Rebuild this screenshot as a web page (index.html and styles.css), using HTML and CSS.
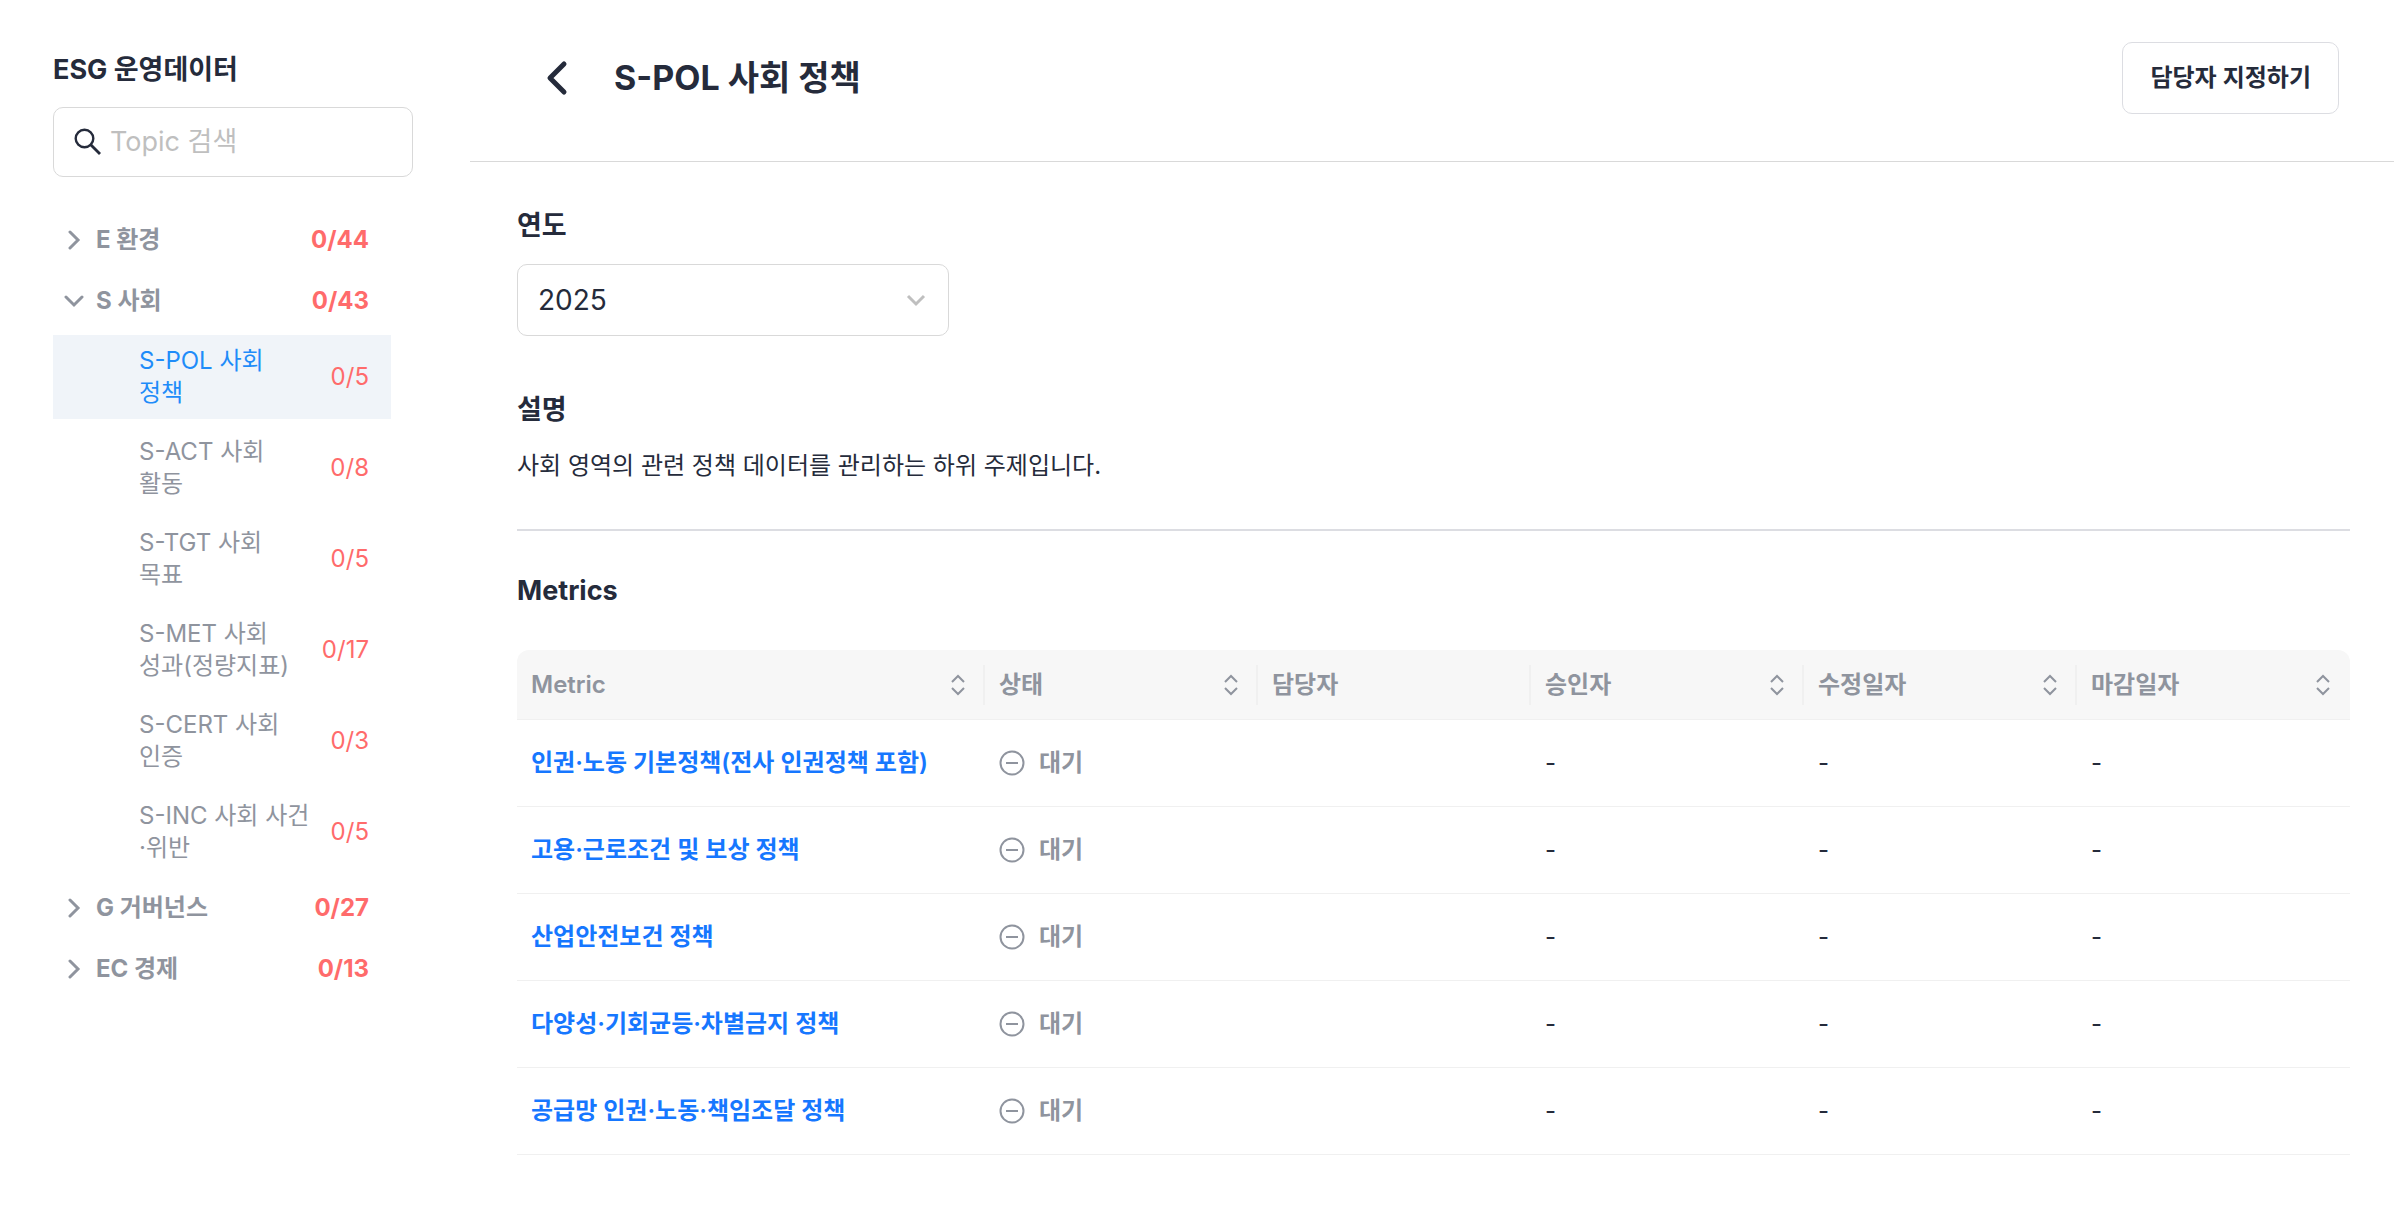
FILE: index.html
```html
<!DOCTYPE html>
<html lang="ko">
<head>
  <meta charset="UTF-8">
  <meta name="viewport" content="width=device-width, initial-scale=1.0">
  <title>ESG 운영데이터</title>
  <link rel="stylesheet" href="styles.css">
</head>
<body>

<!-- 공통 아이콘 -->
<svg class="icon-defs" aria-hidden="true">
  <symbol id="chevron-right" viewBox="0 0 20 20"><path d="M6 2l8 8-8 8"/></symbol>
  <symbol id="chevron-down" viewBox="0 0 20 20"><path d="M2 6l8 8 8-8"/></symbol>
  <symbol id="sorter" viewBox="0 0 18 24"><path d="M3 9l6-6 6 6M3 15l6 6 6-6"/></symbol>
  <symbol id="minus-circle" viewBox="0 0 26 26"><circle cx="13" cy="13" r="11.5"/><path d="M7 13h12"/></symbol>
</svg>

<div class="layout">
  <aside class="sidebar">
    <h2><label for="search">ESG 운영데이터</label></h2>
    <div class="search-box">
      <svg viewBox="0 0 28 28"><circle cx="10.5" cy="10.5" r="8.8" stroke-width="2.4"/><path d="M17 17l9 9" stroke-width="2.8"/></svg>
      <input type="text" id="search" placeholder="Topic 검색">
    </div>

    <nav class="tree">
      <button class="group" type="button"><svg><use href="#chevron-right"/></svg><span>E 환경</span><span class="count">0/44</span></button>
      <button class="group" type="button"><svg><use href="#chevron-down"/></svg><span>S 사회</span><span class="count">0/43</span></button>
      <a class="topic active" href="#"><span>S-POL 사회<br>정책</span><span class="count">0/5</span></a>
      <a class="topic" href="#"><span>S-ACT 사회<br>활동</span><span class="count">0/8</span></a>
      <a class="topic" href="#"><span>S-TGT 사회<br>목표</span><span class="count">0/5</span></a>
      <a class="topic" href="#"><span>S-MET 사회<br>성과(정량지표)</span><span class="count">0/17</span></a>
      <a class="topic" href="#"><span>S-CERT 사회<br>인증</span><span class="count">0/3</span></a>
      <a class="topic" href="#"><span>S-INC 사회 사건<br>·위반</span><span class="count">0/5</span></a>
      <button class="group" type="button"><svg><use href="#chevron-right"/></svg><span>G 거버넌스</span><span class="count">0/27</span></button>
      <button class="group" type="button"><svg><use href="#chevron-right"/></svg><span>EC 경제</span><span class="count">0/13</span></button>
    </nav>
  </aside>

  <main class="main">
    <header class="page-header">
      <button class="back-btn" type="button" aria-label="뒤로"><svg viewBox="0 0 24 36"><path d="M20 4L6 18l14 14"/></svg></button>
      <h1>S-POL 사회 정책</h1>
      <button class="assign-btn" type="button">담당자 지정하기</button>
    </header>

    <div class="content">
      <h3><label for="year">연도</label></h3>
      <div class="select-box">
        <select id="year">
          <option>2025</option>
        </select>
        <svg><use href="#chevron-down"/></svg>
      </div>

      <h3>설명</h3>
      <p class="description">사회 영역의 관련 정책 데이터를 관리하는 하위 주제입니다.</p>

      <hr>

      <h3>Metrics</h3>
      <table class="metrics">
        <thead>
          <tr>
            <th class="col-metric"><div class="th-inner">Metric<svg><use href="#sorter"/></svg></div></th>
            <th><div class="th-inner">상태<svg><use href="#sorter"/></svg></div></th>
            <th><div class="th-inner">담당자</div></th>
            <th><div class="th-inner">승인자<svg><use href="#sorter"/></svg></div></th>
            <th><div class="th-inner">수정일자<svg><use href="#sorter"/></svg></div></th>
            <th><div class="th-inner">마감일자<svg><use href="#sorter"/></svg></div></th>
          </tr>
        </thead>
        <tbody>
          <tr>
            <td><a href="#">인권·노동 기본정책(전사 인권정책 포함)</a></td>
            <td><div class="status"><svg><use href="#minus-circle"/></svg>대기</div></td>
            <td></td><td>-</td><td>-</td><td>-</td>
          </tr>
          <tr>
            <td><a href="#">고용·근로조건 및 보상 정책</a></td>
            <td><div class="status"><svg><use href="#minus-circle"/></svg>대기</div></td>
            <td></td><td>-</td><td>-</td><td>-</td>
          </tr>
          <tr>
            <td><a href="#">산업안전보건 정책</a></td>
            <td><div class="status"><svg><use href="#minus-circle"/></svg>대기</div></td>
            <td></td><td>-</td><td>-</td><td>-</td>
          </tr>
          <tr>
            <td><a href="#">다양성·기회균등·차별금지 정책</a></td>
            <td><div class="status"><svg><use href="#minus-circle"/></svg>대기</div></td>
            <td></td><td>-</td><td>-</td><td>-</td>
          </tr>
          <tr>
            <td><a href="#">공급망 인권·노동·책임조달 정책</a></td>
            <td><div class="status"><svg><use href="#minus-circle"/></svg>대기</div></td>
            <td></td><td>-</td><td>-</td><td>-</td>
          </tr>
        </tbody>
      </table>
    </div>
  </main>
</div>

</body>
</html>
```
FILE: styles.css
```css
* { box-sizing: border-box; }
body { margin: 0; background-color: #fff; color: #252b3b; font-family: Inter, "Noto Sans CJK KR", sans-serif; font-size: 24px; line-height: 32px; }
h1, h2, h3, p { margin: 0; }
button, input, select { font: inherit; color: inherit; }
button { background: none; border: none; padding: 0; cursor: pointer; }
a { text-decoration: none; }
svg { fill: none; stroke: currentColor; flex: none; }
.icon-defs { position: absolute; width: 0; height: 0; }

.layout { display: flex; min-height: 100vh; }

/* 사이드바 */
.sidebar { width: 470px; flex: none; padding: 52px 57px 40px 53px; }
.sidebar h2 { font-size: 27px; line-height: 35px; font-weight: 700; margin-bottom: 20px; }
.search-box { display: flex; align-items: center; gap: 8px; height: 70px; padding: 0 20px; border: 1px solid #d9d9d9; border-radius: 10px; }
.search-box svg { width: 28px; height: 28px; }
.search-box input { flex: 1; min-width: 0; padding: 0; border: none; outline: none; background: none; font-size: 27px; }
.search-box input::placeholder { color: #bfbfbf; opacity: 1; }

.tree { display: flex; flex-direction: column; gap: 7px; margin: 36px 22px 0 0; }
.group { display: flex; align-items: center; gap: 12px; height: 54px; padding: 0 22px 0 11px; color: #8f949e; font-weight: 700; text-align: left; }
.group svg { width: 20px; height: 20px; stroke-width: 3; stroke-linecap: round; }
.topic { display: flex; align-items: center; height: 84px; padding: 0 22px 0 86px; color: #8f949e; }
.topic.active { background-color: #f0f4f9; color: #1f8cf9; }
.count { margin-left: auto; color: #ff6b6b; }

/* 본문 */
.main { flex: 1; min-width: 0; }
.page-header { display: flex; align-items: center; padding: 42px 55px 47px 74px; border-bottom: 1px solid #d9d9d9; }
.back-btn { height: 36px; margin-right: 46px; }
.back-btn svg { display: block; width: 24px; height: 36px; stroke-width: 5; stroke-linecap: round; stroke-linejoin: round; }
.page-header h1 { font-size: 34px; line-height: 44px; font-weight: 700; }
.assign-btn { height: 72px; margin-left: auto; padding: 0 27px; border: 1px solid #dcdde2; border-radius: 10px; font-weight: 600; }

.content { padding: 46px 44px 40px 47px; }
.content h3 { font-size: 27px; line-height: 35px; font-weight: 700; }
.select-box { display: flex; align-items: center; width: 432px; height: 72px; margin: 21px 0 56px; padding-right: 22px; border: 1px solid #d9d9d9; border-radius: 10px; }
.select-box select { flex: 1; align-self: stretch; padding: 0 0 0 20px; border: none; outline: none; background: none; appearance: none; font-size: 28px; }
.select-box svg { width: 20px; height: 20px; stroke-width: 3; color: #bfbfbf; }
.description { margin-top: 23px; }
.content hr { height: 2px; margin: 47px 0 42px; border: none; background-color: #dcdde2; }

.metrics { width: 100%; margin-top: 42px; border-collapse: separate; border-spacing: 0; table-layout: fixed; }
.metrics th, .metrics td { padding: 0 0 0 14px; border-bottom: 1px solid #f0f0f0; text-align: left; }
.metrics th { height: 70px; background-color: #f7f7f7; color: #8f949e; font-weight: 600; }
.metrics th:first-child { border-top-left-radius: 12px; }
.metrics th:last-child { border-top-right-radius: 12px; }
.col-metric { width: 468px; }
.th-inner { display: flex; align-items: center; justify-content: space-between; height: 40px; padding-right: 16px; border-right: 2px solid #f0f0f0; }
.metrics th:last-child .th-inner { border-right-color: transparent; }
.th-inner svg { width: 18px; height: 24px; stroke-width: 2; }
.metrics td { height: 87px; }
.metrics td a { color: #1677ff; font-weight: 600; }
.status { display: flex; align-items: center; gap: 14px; color: #8f949e; font-weight: 600; }
.status svg { width: 26px; height: 26px; stroke-width: 2; }
```
